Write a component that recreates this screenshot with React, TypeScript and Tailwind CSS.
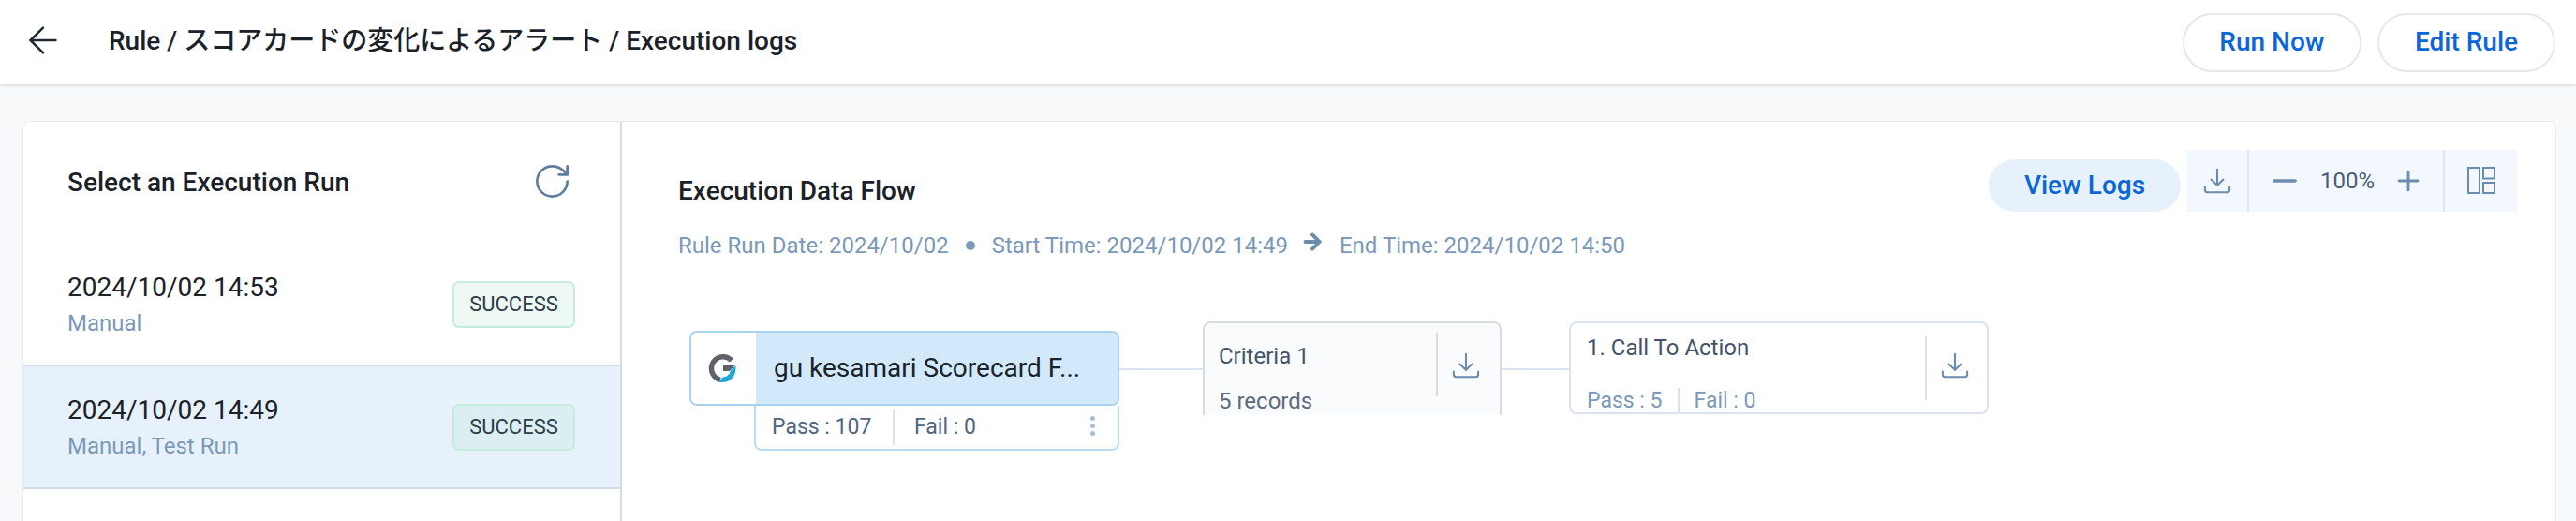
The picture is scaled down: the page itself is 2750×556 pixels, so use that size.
import React from 'react';
import { ArrowLeft, ArrowRight, Minus, Plus, RotateCw } from 'lucide-react';

const DownloadIcon = ({ className }: { className?: string }) => (
  <svg viewBox="0 0 32 32" fill="none" stroke="currentColor" strokeWidth="2.200" strokeLinecap="round" strokeLinejoin="round" className={className}>
    <path d="M16 3v18" />
    <path d="M9 14.500l7 6.500 7-6.500" />
    <path d="M2 23v3c0 2 1 3 3 3h22c2 0 3-1 3-3v-3" />
  </svg>
);

const LayoutIcon = () => (
  <svg viewBox="0 0 30 30" fill="none" stroke="currentColor" strokeWidth="2" className="h-[30px] w-[30px] text-[#6b8cae]">
    <rect x="1" y="1" width="12" height="27" />
    <rect x="17" y="1" width="12" height="11.500" />
    <rect x="17" y="17" width="12" height="11" />
  </svg>
);

const GLogo = () => (
  <svg viewBox="0 0 30 32" fill="none" className="mr-[3px] h-[32px] w-[30px]">
    <path d="M25 7.500A12.500 12.500 0 1 0 13 28.300" stroke="#5f6368" strokeWidth="5.500" />
    <path d="M16 12H29.500L23 19H16z" fill="#5f6368" />
    <path d="M29.500 13V16C29.500 25 23 31 15 31Q13 31 11 30.500L15.500 25.500C20 25.500 23.500 22 24 18.500z" fill="#1ba9dc" />
  </svg>
);

const runs = [
  { time: '2024/10/02 14:53', type: 'Manual', active: false },
  { time: '2024/10/02 14:49', type: 'Manual, Test Run', active: true },
];

export default function App() {
  return (
    <div className="flex h-[556px] w-[2750px] flex-col overflow-hidden bg-[#f8f9fb] font-['Roboto','Noto_Sans_CJK_JP',sans-serif]">
      {/* Шапка */}
      <header className="z-10 flex h-[90px] shrink-0 items-center justify-between bg-white pl-[23px] pr-[22px] shadow-[0_1px_4px_rgba(0,0,0,0.14)]">
        <div className="flex items-center">
          <ArrowLeft size={46} strokeWidth={1.3} className="-mt-[5px] text-[#1f2933]" />
          <span className="-mt-[2px] ml-[47px] text-[28px] font-medium text-[#1a2129]">
            Rule / スコアカードの変化によるアラート / Execution logs
          </span>
        </div>
        <div className="flex items-center gap-[17px]">
          <button className="flex h-[63px] w-[191px] items-center justify-center rounded-full border-2 border-[#e6e8ec] text-[28px] font-medium text-[#0b66d8]">
            Run Now
          </button>
          <button className="flex h-[63px] w-[190px] items-center justify-center rounded-full border-2 border-[#e6e8ec] text-[28px] font-medium text-[#0b66d8]">
            Edit Rule
          </button>
        </div>
      </header>

      <div className="flex min-h-0 flex-1 pl-[24px] pr-[21px] pt-[39px]">
        <div className="flex min-h-0 flex-1 rounded-t-[8px] border border-b-0 border-[#e8ebef] bg-white">
          {/* Список запусков */}
          <aside className="w-[639px] shrink-0 border-r-2 border-[#d3dde8]">
            <div className="flex h-[130px] items-start justify-between pl-[47px] pr-[51px] pt-[47px]">
              <span className="text-[28px] font-medium leading-[36px] text-[#1a2129]">Select an Execution Run</span>
              <RotateCw size={43} strokeWidth={1.5} className="-mt-[5px] text-[#5f7e9e]" />
            </div>
            {runs.map((run) => (
              <div
                key={run.time}
                className={`flex h-[131px] items-center justify-between border-b-2 border-[#d3dde8] pl-[47px] pr-[48px] ${run.active ? 'bg-[#e6f1fc]' : 'bg-white'}`}
              >
                <div className="flex flex-col gap-[8px]">
                  <span className="text-[28px] leading-[32px] text-[#1a2129]">{run.time}</span>
                  <span className="text-[24px] leading-[28px] text-[#7b99b8]">{run.type}</span>
                </div>
                <span className={`flex h-[50px] w-[131px] items-center justify-center rounded-[7px] border-2 border-[#c5ecdc] text-[22px] text-[#2e3b48] ${run.active ? 'bg-[#dbeff3]' : 'bg-[#eef9f4]'}`}>
                  SUCCESS
                </span>
              </div>
            ))}
          </aside>

          {/* Поток выполнения */}
          <main className="relative min-w-0 flex-1">
            <div className="flex items-start justify-between pl-[60px] pr-[41px] pt-[30px]">
              <div className="flex flex-col">
                <span className="mt-[26px] text-[28px] font-medium leading-[36px] text-[#1a2129]">Execution Data Flow</span>
                <div className="mt-[25px] flex items-center text-[24px] leading-[30px] text-[#7b99b8]">
                  <span>Rule Run Date: 2024/10/02</span>
                  <span className="mx-[18px] h-[10px] w-[10px] rounded-full bg-[#7b99b8]" />
                  <span>Start Time: 2024/10/02 14:49</span>
                  <ArrowRight size={26} strokeWidth={3.5} className="-mt-[8px] ml-[13px] mr-[16px] text-[#6b8cae]" />
                  <span>End Time: 2024/10/02 14:50</span>
                </div>
              </div>
              <div className="flex items-center gap-[6px]">
                <button className="mt-[10px] flex h-[56px] w-[205px] items-center justify-center rounded-full bg-[#e6f1fc] text-[28px] font-medium text-[#0b66d8]">
                  View Logs
                </button>
                <div className="flex h-[66px] w-[353px] items-center bg-[#f3f8fe]">
                  <div className="flex h-full w-[67px] items-center justify-center border-r-2 border-[#dde5ee]">
                    <DownloadIcon className="h-[30px] w-[30px] text-[#6b8cae]" />
                  </div>
                  <div className="flex h-full flex-1 items-center justify-between border-r-2 border-[#dde5ee] pl-[19px] pr-[20px]">
                    <Minus size={38} strokeWidth={2.3} className="text-[#6b8cae]" />
                    <span className="text-[24px] text-[#4a5d73]">100%</span>
                    <Plus size={34} strokeWidth={2} className="text-[#6b8cae]" />
                  </div>
                  <div className="flex h-full w-[77px] items-center justify-center">
                    <LayoutIcon />
                  </div>
                </div>
              </div>
            </div>

            {/* Холст: узлы лежат на свободных координатах и обрезаются снизу */}
            <div className="absolute left-0 right-0 top-[213px] h-[100px] overflow-hidden bg-white">
              <div className="absolute left-[531px] top-[50px] h-[2px] w-[90px] bg-[#dbe4ee]" />
              <div className="absolute left-[938px] top-[50px] h-[2px] w-[73px] bg-[#dbe4ee]" />

              <div className="absolute left-[620px] top-0 h-[130px] w-[319px] rounded-[8px] border-2 border-[#d8dce0] bg-[#fafbfc]">
                <div className="absolute left-[15px] top-[19px] text-[24px] leading-[32px] text-[#445468]">Criteria 1</div>
                <div className="absolute left-[15px] top-[67px] text-[24px] leading-[32px] text-[#5c6b7c]">5 records</div>
                <div className="absolute left-[247px] top-[10px] h-[68px] w-[2px] bg-[#d8dce0]" />
                <DownloadIcon className="absolute left-[264px] top-[30px] h-[30px] w-[30px] text-[#6b8cae]" />
              </div>

              <div className="absolute left-[1011px] top-0 h-[99px] w-[448px] rounded-[8px] border-2 border-[#dbe4ee] bg-white">
                <div className="absolute left-[17px] top-[10px] text-[24px] leading-[32px] text-[#445468]">1. Call To Action</div>
                <div className="absolute left-[17px] top-[67px] flex items-center text-[23px] leading-[32px] text-[#7b99b8]">
                  <span>Pass : 5</span>
                  <span className="mx-[16px] h-[28px] w-[2px] bg-[#dbe4ee]" />
                  <span>Fail : 0</span>
                </div>
                <div className="absolute left-[378px] top-[14px] h-[68px] w-[2px] bg-[#dbe4ee]" />
                <DownloadIcon className="absolute left-[395px] top-[30px] h-[30px] w-[30px] text-[#6b8cae]" />
              </div>
            </div>

            <div className="absolute left-[72px] top-[223px] w-[459px]">
              <div className="flex h-[80px] overflow-hidden rounded-[8px] border-2 border-[#a9d3ec]">
                <div className="flex w-[69px] shrink-0 items-center justify-center bg-white">
                  <GLogo />
                </div>
                <div className="flex flex-1 items-center bg-[#d1e9fa] pl-[19px] text-[28px] text-[#1a2129]">
                  gu kesamari Scorecard F...
                </div>
              </div>
              <div className="relative ml-[69px] flex h-[48px] items-center rounded-b-[8px] border-2 border-t-0 border-[#b9dcf0] text-[23px] text-[#4f6580]">
                <span className="ml-[17px] w-[129px]">Pass : 107</span>
                <span className="h-[38px] w-[2px] bg-[#dbe4ee]" />
                <span className="ml-[21px]">Fail : 0</span>
                <div className="absolute right-[24px] top-[11px] flex flex-col gap-[3px]">
                  <span className="h-[5px] w-[5px] rounded-full bg-[#a9bcd3]" />
                  <span className="h-[5px] w-[5px] rounded-full bg-[#a9bcd3]" />
                  <span className="h-[5px] w-[5px] rounded-full bg-[#a9bcd3]" />
                </div>
              </div>
            </div>
          </main>
        </div>
      </div>
    </div>
  );
}
